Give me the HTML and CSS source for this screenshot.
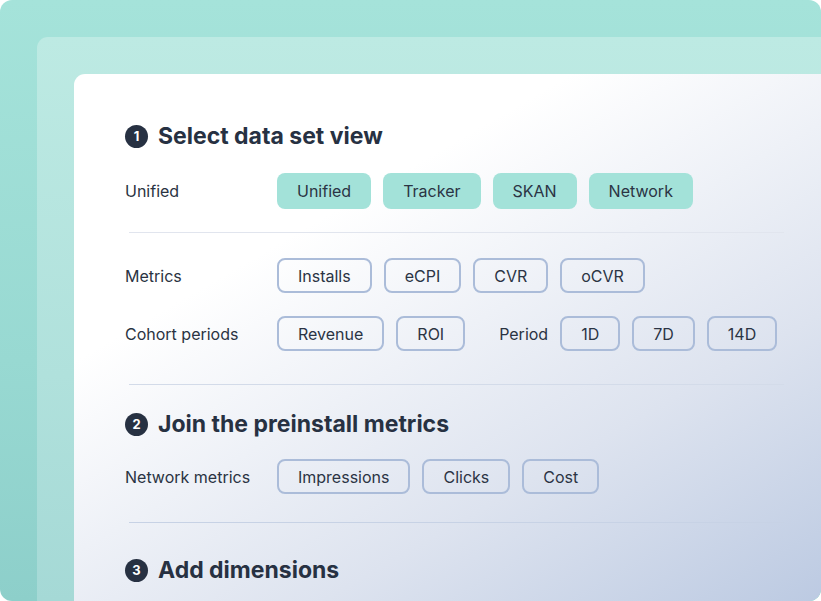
FILE: index.html
```html
<!DOCTYPE html>
<html lang="en">
<head>
  <meta charset="UTF-8" />
  <title>Data set builder</title>
  <link rel="stylesheet" href="styles.css">
</head>
<body>

<div class="frame">
  <div class="layer">
    <div class="card">

      <h2 class="step-title"><span class="step-num">1</span>Select data set view</h2>
      <div class="row first">
        <span class="row-label">Unified</span>
        <span class="chip filled">Unified</span>
        <span class="chip filled">Tracker</span>
        <span class="chip filled">SKAN</span>
        <span class="chip filled">Network</span>
      </div>

      <hr class="divider">

      <div class="row after-divider">
        <span class="row-label">Metrics</span>
        <span class="chip">Installs</span>
        <span class="chip">eCPI</span>
        <span class="chip">CVR</span>
        <span class="chip">oCVR</span>
      </div>
      <div class="row">
        <span class="row-label">Cohort periods</span>
        <span class="chip">Revenue</span>
        <span class="chip">ROI</span>
        <span class="inline-label">Period</span>
        <span class="chip">1D</span>
        <span class="chip">7D</span>
        <span class="chip">14D</span>
      </div>

      <hr class="divider wide">

      <h2 class="step-title second"><span class="step-num">2</span>Join the preinstall metrics</h2>
      <div class="row tight">
        <span class="row-label">Network metrics</span>
        <span class="chip">Impressions</span>
        <span class="chip">Clicks</span>
        <span class="chip">Cost</span>
      </div>

      <hr class="divider mid">

      <h2 class="step-title last"><span class="step-num">3</span>Add dimensions</h2>

    </div>
  </div>
</div>

</body>
</html>
```

FILE: styles.css
```css
body {
  margin: 0;
  font-family: Inter, "Noto Sans", Arial, sans-serif;
  color: #2a3342;
  background: #fff;
}
.frame {
  width: 821px;
  height: 601px;
  border-radius: 12px;
  overflow: hidden;
  padding: 37px 0 0 37px;
  box-sizing: border-box;
  background: linear-gradient(180deg, #a5e3da 0%, #98d9d2 60%, #8dcfca 100%);
}
.layer {
  height: 100%;
  border-top-left-radius: 11px;
  padding: 37px 0 0 37px;
  box-sizing: border-box;
  background: linear-gradient(180deg, #bdeae3 0%, #b0e1dc 60%, #a5d9d6 100%);
}
.card {
  height: 100%;
  border-top-left-radius: 11px;
  border-bottom-right-radius: 12px;
  padding: 48px 37px 0 51px;
  box-sizing: border-box;
  background: linear-gradient(150deg, #ffffff 30%, #eef1f7 50%, #dde3ef 70%, #bccae2 100%);
}
.step-title {
  display: flex;
  align-items: center;
  margin: 0;
  height: 28px;
  font-size: 23px;
  font-weight: 700;
  color: #273142;
}
.step-num {
  display: inline-flex;
  align-items: center;
  justify-content: center;
  width: 23px;
  height: 23px;
  margin-right: 10px;
  border-radius: 50%;
  background: #273142;
  color: #fff;
  font-size: 13px;
  font-weight: 700;
}
.row {
  display: flex;
  align-items: center;
  gap: 12px;
  margin-top: 23px;
  font-size: 16px;
}
.row.tight {
  margin-top: 21px;
}
.row-label {
  flex: 0 0 140px;
}
.inline-label {
  margin-left: 22px;
}
.chip {
  display: inline-flex;
  align-items: center;
  height: 35px;
  padding: 0 19px;
  box-sizing: border-box;
  border: 2px solid #abbcd9;
  border-radius: 8px;
  color: #2b3444;
}
.chip.filled {
  height: 36px;
  border: none;
  padding: 0 20px;
  background: #a3e2d9;
}
.divider {
  border: none;
  height: 1px;
  margin: 23px 0 0 4px;
  background: #e1e5ee;
}
.divider.wide {
  margin-top: 33px;
  background: #d3dbe9;
}
.divider.mid {
  margin-top: 28px;
  background: #c7d2e5;
}
.after-divider {
  margin-top: 25px;
}
.step-title.second {
  margin-top: 25px;
}
.step-title.last {
  margin-top: 33px;
}
```
